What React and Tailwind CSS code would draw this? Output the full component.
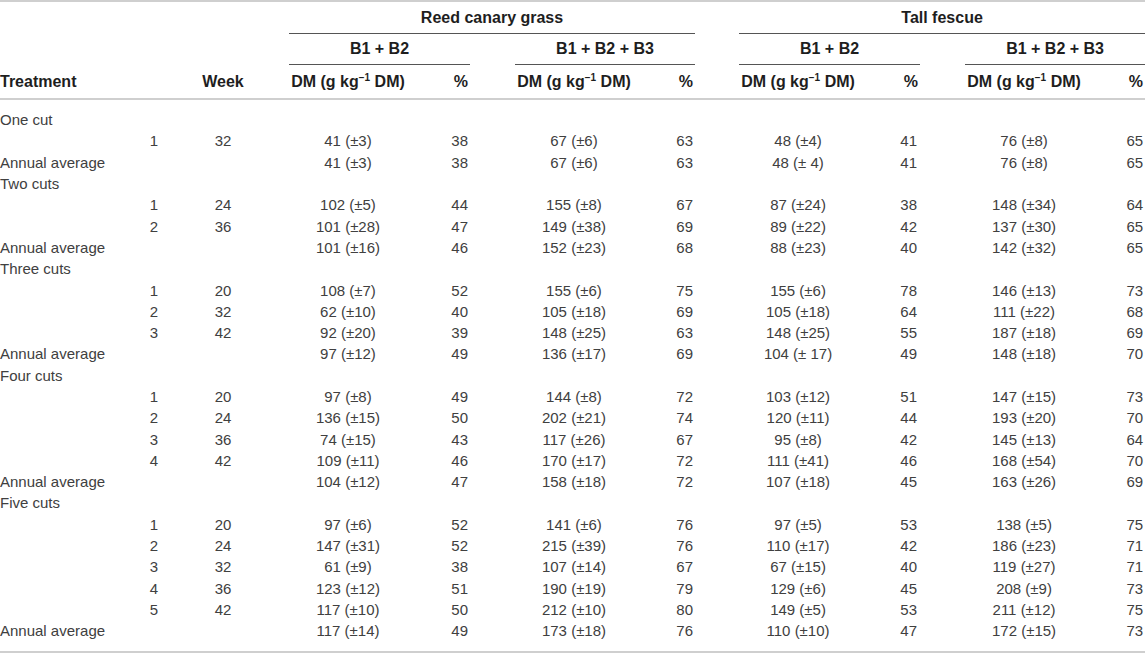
import React from "react";

// column widths (px) for the 15 grid columns, gaps included
const cols = [135, 38, 100, 16, 118, 63, 45, 118, 62, 44, 118, 63, 45, 118, 62];

const groups = [
  {
    name: "One cut",
    rows: [[1, 32, "41 (±3)", 38, "67 (±6)", 63, "48 (±4)", 41, "76 (±8)", 65]],
    avg: ["41 (±3)", 38, "67 (±6)", 63, "48 (± 4)", 41, "76 (±8)", 65],
  },
  {
    name: "Two cuts",
    rows: [
      [1, 24, "102 (±5)", 44, "155 (±8)", 67, "87 (±24)", 38, "148 (±34)", 64],
      [2, 36, "101 (±28)", 47, "149 (±38)", 69, "89 (±22)", 42, "137 (±30)", 65],
    ],
    avg: ["101 (±16)", 46, "152 (±23)", 68, "88 (±23)", 40, "142 (±32)", 65],
  },
  {
    name: "Three cuts",
    rows: [
      [1, 20, "108 (±7)", 52, "155 (±6)", 75, "155 (±6)", 78, "146 (±13)", 73],
      [2, 32, "62 (±10)", 40, "105 (±18)", 69, "105 (±18)", 64, "111 (±22)", 68],
      [3, 42, "92 (±20)", 39, "148 (±25)", 63, "148 (±25)", 55, "187 (±18)", 69],
    ],
    avg: ["97 (±12)", 49, "136 (±17)", 69, "104 (± 17)", 49, "148 (±18)", 70],
  },
  {
    name: "Four cuts",
    rows: [
      [1, 20, "97 (±8)", 49, "144 (±8)", 72, "103 (±12)", 51, "147 (±15)", 73],
      [2, 24, "136 (±15)", 50, "202 (±21)", 74, "120 (±11)", 44, "193 (±20)", 70],
      [3, 36, "74 (±15)", 43, "117 (±26)", 67, "95 (±8)", 42, "145 (±13)", 64],
      [4, 42, "109 (±11)", 46, "170 (±17)", 72, "111 (±41)", 46, "168 (±54)", 70],
    ],
    avg: ["104 (±12)", 47, "158 (±18)", 72, "107 (±18)", 45, "163 (±26)", 69],
  },
  {
    name: "Five cuts",
    rows: [
      [1, 20, "97 (±6)", 52, "141 (±6)", 76, "97 (±5)", 53, "138 (±5)", 75],
      [2, 24, "147 (±31)", 52, "215 (±39)", 76, "110 (±17)", 42, "186 (±23)", 71],
      [3, 32, "61 (±9)", 38, "107 (±14)", 67, "67 (±15)", 40, "119 (±27)", 71],
      [4, 36, "123 (±12)", 51, "190 (±19)", 79, "129 (±6)", 45, "208 (±9)", 73],
      [5, 42, "117 (±10)", 50, "212 (±10)", 80, "149 (±5)", 53, "211 (±12)", 75],
    ],
    avg: ["117 (±14)", 49, "173 (±18)", 76, "110 (±10)", 47, "172 (±15)", 73],
  },
];

function Values({ v }) {
  // v = [dm1, p1, dm2, p2, dm3, p3, dm4, p4]
  return (
    <>
      <td></td>
      <td className="text-center">{v[0]}</td>
      <td className="text-right pr-[2px]">{v[1]}</td>
      <td></td>
      <td className="text-center">{v[2]}</td>
      <td className="text-right pr-[2px]">{v[3]}</td>
      <td></td>
      <td className="text-center">{v[4]}</td>
      <td className="text-right pr-[3px]">{v[5]}</td>
      <td></td>
      <td className="text-center">{v[6]}</td>
      <td className="text-right pr-[2px]">{v[7]}</td>
    </>
  );
}

export default function App() {
  return (
    <div className="w-[1145px] h-[655px] bg-white font-['Liberation_Sans',Arial,sans-serif] text-[15px] text-[#404040]">
      <div className="border-t-2 border-b-2 border-[#cfcfcf]">
        <table className="table-fixed border-separate border-spacing-0 w-[1145px] leading-none">
          <colgroup>
            {cols.map((w, i) => (
              <col key={i} style={{ width: w }} />
            ))}
          </colgroup>
          <thead className="text-[#1e1e1e] text-[16px]">
            <tr className="h-[32px]">
              <th colSpan={4}></th>
              <th colSpan={5} className="font-bold text-center border-b border-[#555]">
                Reed canary grass
              </th>
              <th></th>
              <th colSpan={5} className="font-bold text-center border-b border-[#555]">
                Tall fescue
              </th>
            </tr>
            <tr className="h-[31px]">
              <th colSpan={4}></th>
              <th colSpan={2} className="font-bold text-center border-b border-[#555]">B1 + B2</th>
              <th></th>
              <th colSpan={2} className="font-bold text-center border-b border-[#555]">B1 + B2 + B3</th>
              <th></th>
              <th colSpan={2} className="font-bold text-center border-b border-[#555]">B1 + B2</th>
              <th></th>
              <th colSpan={2} className="font-bold text-center border-b border-[#555]">B1 + B2 + B3</th>
            </tr>
            <tr className="h-[35px]">
              <th className="text-left font-bold border-b-2 border-[#cfcfcf]">Treatment</th>
              <th className="border-b-2 border-[#cfcfcf]"></th>
              <th className="text-center font-bold border-b-2 border-[#cfcfcf]">Week</th>
              {[0, 1, 2, 3].map((g) => (
                <React.Fragment key={g}>
                  <th className="border-b-2 border-[#cfcfcf]"></th>
                  <th className="text-center font-bold whitespace-nowrap border-b-2 border-[#cfcfcf]">
                    DM (g kg<sup className="text-[10px] -top-[0.6em]">−1</sup> DM)
                  </th>
                  <th className="text-right font-bold pr-[2px] border-b-2 border-[#cfcfcf]">%</th>
                </React.Fragment>
              ))}
            </tr>
          </thead>
          <tbody>
            <tr className="h-[9px]">
              <td colSpan={15}></td>
            </tr>
            {groups.map((g) => (
              <React.Fragment key={g.name}>
                <tr className="h-[21.3px]">
                  <td colSpan={15} className="text-left">{g.name}</td>
                </tr>
                {g.rows.map((r) => (
                  <tr key={r[0]} className="h-[21.3px]">
                    <td></td>
                    <td className="text-center">{r[0]}</td>
                    <td className="text-center">{r[1]}</td>
                    <Values v={r.slice(2)} />
                  </tr>
                ))}
                <tr className="h-[21.3px]">
                  <td className="whitespace-nowrap">Annual average</td>
                  <td></td>
                  <td></td>
                  <Values v={g.avg} />
                </tr>
              </React.Fragment>
            ))}
            <tr className="h-[10px]">
              <td colSpan={15}></td>
            </tr>
          </tbody>
        </table>
      </div>
    </div>
  );
}
